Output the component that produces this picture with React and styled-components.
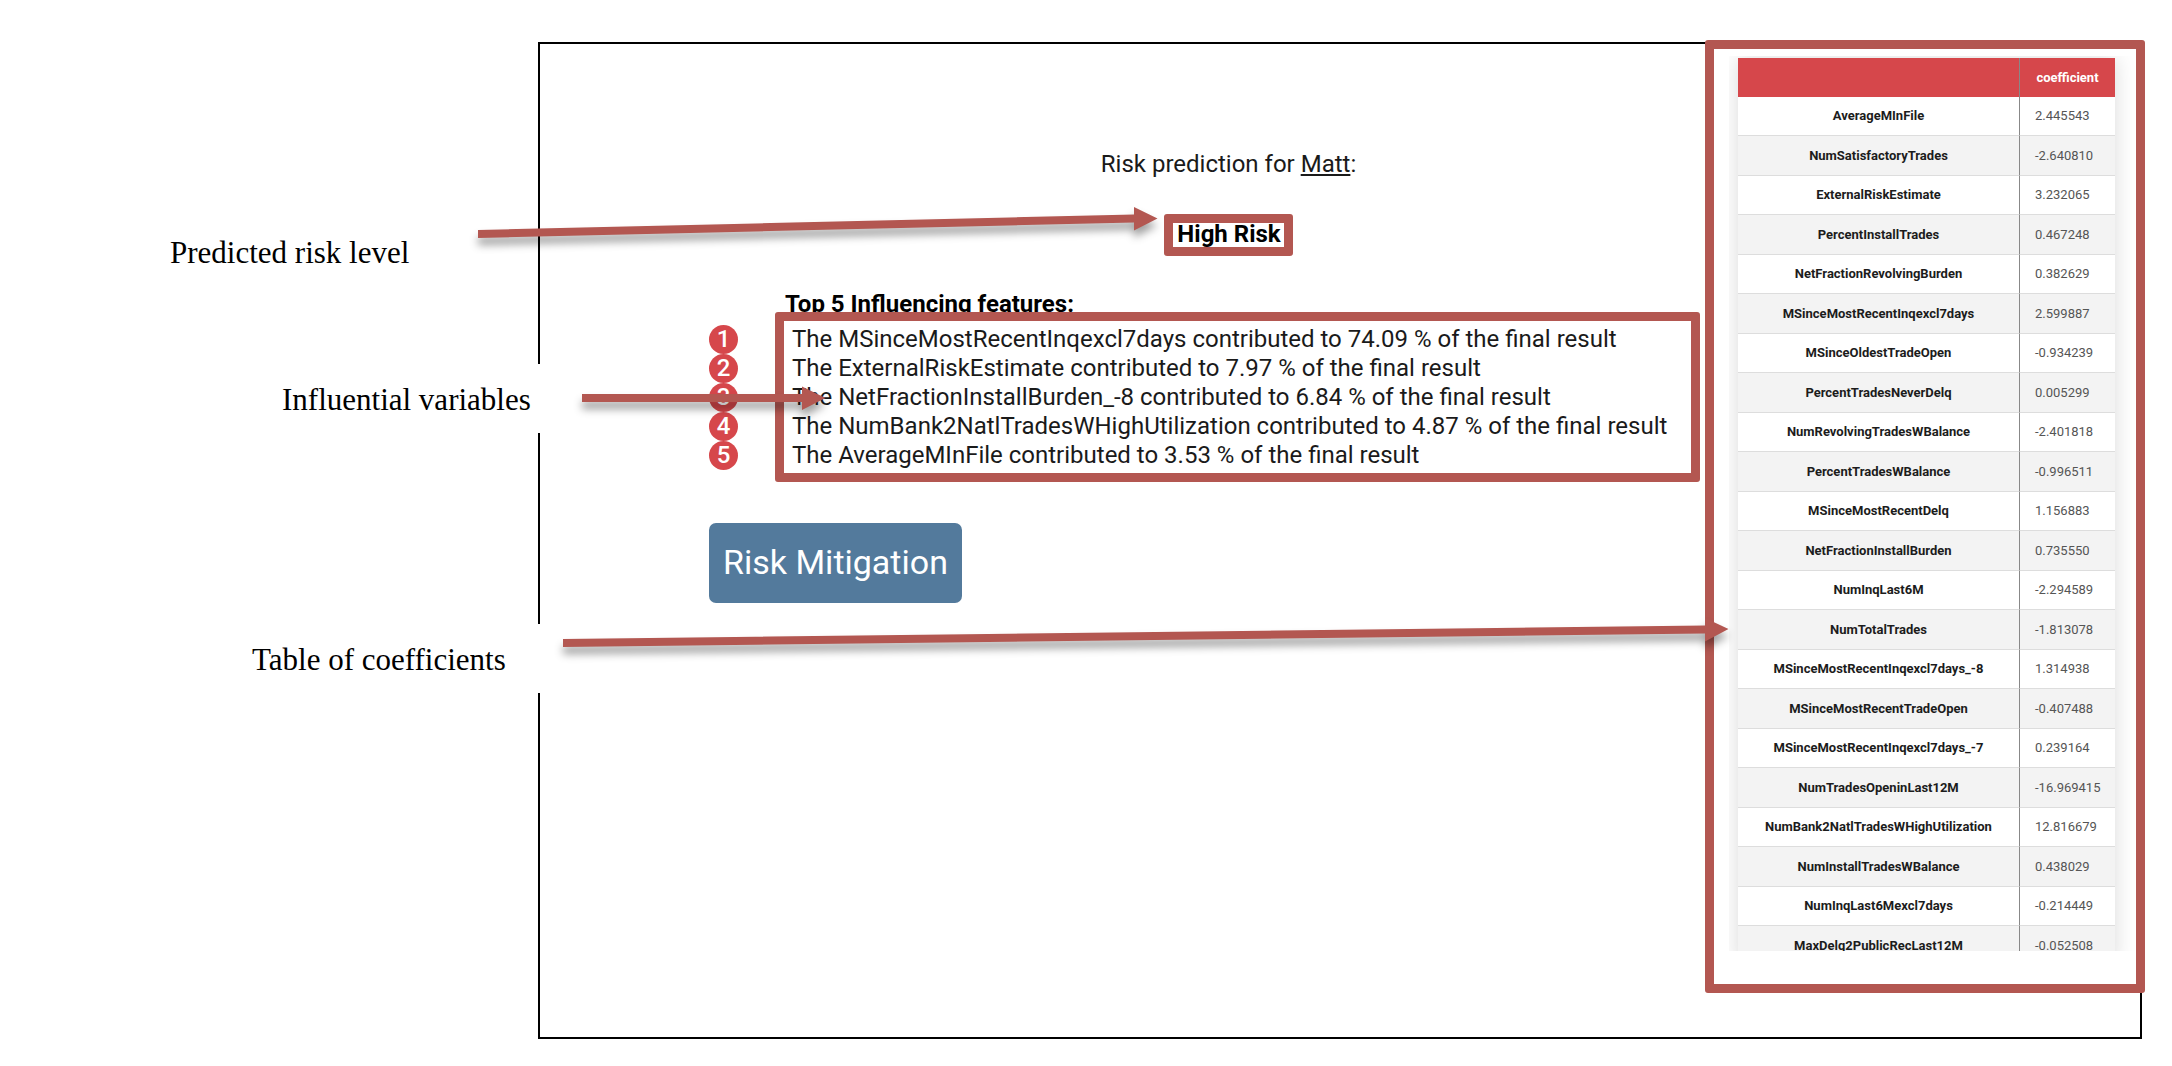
import React from "react";
import styled, { createGlobalStyle } from "styled-components";

const MARK = "#b35751";
const RED = "#d6474b";

const GlobalStyle = createGlobalStyle`
  *, *::before, *::after { box-sizing: border-box; }
  body { margin: 0; background: #fff; color: #000; font-family: Roboto, "Liberation Sans", sans-serif; }
`;

const Page = styled.main`
  position: relative;
  display: grid;
  grid-template-columns: 538px minmax(0, 1fr);
  padding: 42px 30px 27px 0;
  overflow: hidden;
`;

const Labels = styled.aside`
  position: relative;
  z-index: 1;
  padding-top: 175px;
  font: 31px/34px "Liberation Serif", "Times New Roman", serif;
`;

const Label = styled.p`
  height: 69px;
  margin: ${(p) => p.$above}px ${(p) => (p.$covers ? -8 : 0)}px 0 ${(p) => p.$indent}px;
  padding-top: 19px;
  background: #fff;
  white-space: nowrap;
`;

const Screen = styled.section`
  display: grid;
  grid-template-columns: minmax(0, 1fr) 435px;
  border: 2px solid #000;
`;

const Results = styled.div`
  padding: 104px 5px 0 169px;
  font-size: 24px;
  line-height: 32px;
`;

const Summary = styled.header`
  display: flex;
  flex-direction: column;
  align-items: center;
  gap: 34px;
  padding-left: 48px;
`;

const Prediction = styled.p`
  margin: 0;
  color: #1a1a1a;
`;

const Name = styled.u`
  text-decoration-thickness: 2px;
  text-underline-offset: 2px;
`;

const marked = `
  content: "";
  position: absolute;
  border: 9px solid ${MARK};
  border-radius: 3px;
`;

const Verdict = styled.strong`
  position: relative;
  height: 42px;
  padding: 4px 12px 0 13px;
  font-weight: 700;
  &::after { ${marked} inset: 0; }
`;

const Heading = styled.h2`
  margin: 32px 0 0 76px;
  font-size: 24px;
  line-height: 32px;
  font-weight: 700;
`;

const Features = styled.ol`
  position: relative;
  margin: 5px 0 0;
  padding: 0;
  list-style: none;
  color: #1a1a1a;
  &::after { ${marked} inset: -13px 0 -12px 66px; }
`;

const Feature = styled.li`
  display: flex;
  gap: 54px;
  line-height: 29px;
  white-space: nowrap;
`;

const Badge = styled.span`
  width: 29px;
  height: 29px;
  border-radius: 50%;
  background: ${RED};
  color: #fff;
  font-weight: 500;
  text-align: center;
`;

const Action = styled.button`
  display: block;
  height: 80px;
  margin-top: 53px;
  padding: 0 14px 3px;
  border: 0;
  border-radius: 7px;
  background: #537a9c;
  color: #fff;
  font: 400 34px/40px Roboto, sans-serif;
`;

const TablePane = styled.aside`
  margin: -4px -5px 44px 0;
  padding: 7px 0 33px 15px;
  border: 9px solid ${MARK};
  border-radius: 3px;
  background: #fff;
`;

const Scroller = styled.div`
  height: 895px;
  padding: 2px 21px 0 9px;
  overflow: hidden;
`;

const Table = styled.table`
  width: 100%;
  table-layout: fixed;
  border-collapse: separate;
  border-spacing: 0;
  box-shadow: 0 0 20px rgba(0, 0, 0, 0.15);
  background: #fff;
  font-size: 13px;
  line-height: 16px;

  th, td { height: 39px; padding: 0; }
  th:first-child { width: 282px; border-right: 1px solid #888; }
  thead th { background: ${RED}; color: #fff; }
  tbody th { color: #1c1c1c; }
  tbody td { padding-left: 15px; color: #555; }
  tbody th, tbody td { border-bottom: 1px solid #ddd; }
  tbody tr:nth-child(even) { background: #f3f3f3; }
  tbody tr:nth-child(even) > * { height: 40px; }
`;

const Arrows = styled.svg`
  position: absolute;
  z-index: 2;
  top: 0;
  left: 0;
  pointer-events: none;
  filter: drop-shadow(0 7px 4px rgba(0, 0, 0, 0.38));
`;

const features = [
  ["MSinceMostRecentInqexcl7days", "74.09"],
  ["ExternalRiskEstimate", "7.97"],
  ["NetFractionInstallBurden_-8", "6.84"],
  ["NumBank2NatlTradesWHighUtilization", "4.87"],
  ["AverageMInFile", "3.53"],
];

const coefficients = [
  ["AverageMInFile", "2.445543"],
  ["NumSatisfactoryTrades", "-2.640810"],
  ["ExternalRiskEstimate", "3.232065"],
  ["PercentInstallTrades", "0.467248"],
  ["NetFractionRevolvingBurden", "0.382629"],
  ["MSinceMostRecentInqexcl7days", "2.599887"],
  ["MSinceOldestTradeOpen", "-0.934239"],
  ["PercentTradesNeverDelq", "0.005299"],
  ["NumRevolvingTradesWBalance", "-2.401818"],
  ["PercentTradesWBalance", "-0.996511"],
  ["MSinceMostRecentDelq", "1.156883"],
  ["NetFractionInstallBurden", "0.735550"],
  ["NumInqLast6M", "-2.294589"],
  ["NumTotalTrades", "-1.813078"],
  ["MSinceMostRecentInqexcl7days_-8", "1.314938"],
  ["MSinceMostRecentTradeOpen", "-0.407488"],
  ["MSinceMostRecentInqexcl7days_-7", "0.239164"],
  ["NumTradesOpeninLast12M", "-16.969415"],
  ["NumBank2NatlTradesWHighUtilization", "12.816679"],
  ["NumInstallTradesWBalance", "0.438029"],
  ["NumInqLast6Mexcl7days", "-0.214449"],
  ["MaxDelq2PublicRecLast12M", "-0.052508"],
];

export default function App() {
  return (
    <>
      <GlobalStyle />
      <Page>
        <Labels>
          <Label $above={0} $indent={170}>Predicted risk level</Label>
          <Label $above={78} $indent={282} $covers>Influential variables</Label>
          <Label $above={191} $indent={252} $covers>Table of coefficients</Label>
        </Labels>
        <Screen>
          <Results>
            <Summary>
              <Prediction>Risk prediction for <Name>Matt</Name>:</Prediction>
              <Verdict>High Risk</Verdict>
            </Summary>
            <Heading>Top 5 Influencing features:</Heading>
            <Features>
              {features.map(([name, share], i) => (
                <Feature key={name}>
                  <Badge>{i + 1}</Badge>
                  <span>{`The ${name} contributed to ${share} % of the final result`}</span>
                </Feature>
              ))}
            </Features>
            <Action type="button">Risk Mitigation</Action>
          </Results>
          <TablePane>
            <Scroller>
              <Table>
                <thead>
                  <tr>
                    <th aria-label="feature" />
                    <th scope="col">coefficient</th>
                  </tr>
                </thead>
                <tbody>
                  {coefficients.map(([name, value]) => (
                    <tr key={name}>
                      <th scope="row">{name}</th>
                      <td>{value}</td>
                    </tr>
                  ))}
                </tbody>
              </Table>
            </Scroller>
          </TablePane>
        </Screen>
        <Arrows width="2172" height="1066" aria-hidden="true" fill={MARK}>
          <path d="M478 230L1134 214.500V207L1157.500 218.500L1134 230.500V222.500L478 238Z" />
          <path d="M582 394H802V386.500L825.500 398L802 410V402H582Z" />
          <path d="M563 639L1705 625.500V618L1728.500 629L1705 641.500V633.500L563 647Z" />
        </Arrows>
      </Page>
    </>
  );
}
